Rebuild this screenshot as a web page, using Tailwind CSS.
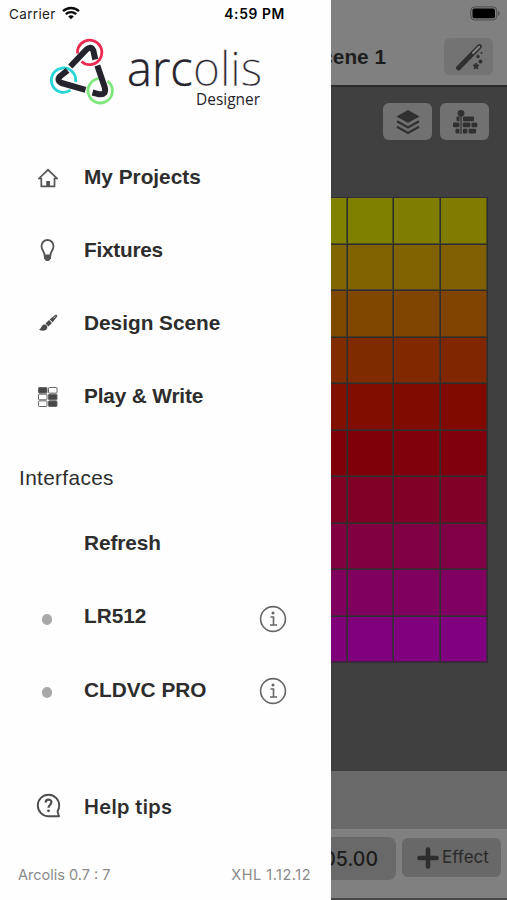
<!DOCTYPE html>
<html lang="en">
<head>
    <meta charset="UTF-8">
    <meta name="viewport" content="width=device-width, initial-scale=1.0">
    <title>Arcolis Designer</title>
    <script src="https://cdn.jsdelivr.net/npm/@tailwindcss/browser@4"></script>
</head>
<body class="bg-[#808080]">
    <div class="flex w-[507px] h-[900px] overflow-hidden font-['Liberation_Sans',sans-serif] text-[#2d2d2d]">

        <!-- Side menu -->
        <aside class="w-[331px] shrink-0 h-full bg-[#fefefe] flex flex-col">
            <!-- Status bar -->
            <div class="h-7 shrink-0 flex items-center pl-[9px] pr-[46px] text-[13.5px] text-[#222] font-['Inter',sans-serif]">
                <span class="tracking-[0.35px]">Carrier</span>
                <svg class="ml-[6px] -mt-[2px] w-[18px] h-[14px]" viewBox="0 0 18 14" fill="none" stroke="#0a0a0a" stroke-width="2.3">
                    <path d="M1 5.2C5.5 .9 12.5 .9 17 5.2"/>
                    <path d="M3.8 8.2C6.8 5.4 11.2 5.4 14.2 8.2"/>
                    <path d="M6.2 10.4C7.8 8.9 10.2 8.9 11.8 10.4L9 13.2z" fill="#0a0a0a" stroke="none"/>
                </svg>
                <span class="ml-auto font-semibold text-[13.8px] tracking-[0.65px] text-black">4:59 PM</span>
            </div>

            <!-- Logo -->
            <div class="h-[111.5px] shrink-0 pl-[44px]">
                <svg class="w-[230px] h-[90px]" viewBox="44 28 230 90" fill="none">
                    <g stroke-width="2.8">
                        <path d="M77.5 53.5A12.2 12.2 0 1 1 81.5 61.5" stroke="#ec2a50"/>
                        <path d="M70.5 90.2A12.2 12.2 0 1 1 75.6 82" stroke="#27d5d8"/>
                        <path d="M98.5 78.7A12.2 12.2 0 1 0 107.5 81" stroke="#7fe67c"/>
                    </g>
                    <g stroke="#25232b" stroke-width="6" stroke-linejoin="round">
                        <path d="M70.3 66.5L86.5 49.5Q91 45.5 93.3 50.5L95.3 59.5"/>
                        <path d="M97.3 65.5L104.8 87.5Q106.5 95 99.5 94.3L92.5 92.5"/>
                        <path d="M85.5 89.8L61.500 83Q56 80.300 60.500 76L67.5 70.3"/>
                    </g>
                    <g fill="#25232b" font-family="'Open Sans', sans-serif">
                        <text x="127" y="86" font-size="47" font-weight="300" stroke-width=".4"><tspan stroke="#25232b" textLength="65.5" lengthAdjust="spacingAndGlyphs">arc</tspan><tspan x="193" stroke="#fefefe" textLength="69" lengthAdjust="spacingAndGlyphs">olis</tspan></text>
                        <text x="196" y="105" font-size="15.5" textLength="64" lengthAdjust="spacingAndGlyphs">Designer</text>
                    </g>
                </svg>
            </div>

            <!-- Pages -->
            <nav class="text-[20.8px] font-bold">
                <a class="h-[73.3px] flex items-center">
                    <span class="w-[84px] pl-[38px] pt-[3px]">
                        <svg class="w-5 h-5" viewBox="0 0 20 20" fill="none" stroke="#555" stroke-width="1.7">
                            <path d="M1 10.5L10 1.8 19 10.5H16.5V18.3H3.3V10.5z"/>
                            <path d="M8.2 18V13h3.8v5z" fill="#555" stroke="none"/>
                        </svg>
                    </span>
                    My Projects
                </a>
                <a class="h-[73.3px] flex items-center">
                    <span class="w-[84px] pl-[40px] pt-[3px]">
                        <svg class="w-[15px] h-[23px]" viewBox="0 0 15 23" fill="none" stroke="#555" stroke-width="1.8">
                            <path d="M4.6 16.5C4.6 12 1.5 11.5 1.5 7a6 6 0 0 1 12 0C13.5 11.5 10.4 12 10.4 16.5z"/>
                            <path d="M4 16.5h7v3L8.8 22H6.2L4 19.5z" fill="#555" stroke="none"/>
                        </svg>
                    </span>
                    <span class="tracking-[-0.25px]">Fixtures</span>
                </a>
                <a class="h-[73.3px] flex items-center">
                    <span class="w-[84px] pl-[39px] pt-[1px]">
                        <svg class="w-[19px] h-[18px]" viewBox="0 0 19 18" fill="#4a4a4a">
                            <path d="M0 15.5C2.5 15 2.2 11.5 4.8 10.6 7 10 9 12 8.2 14.2 7 17 3 17.5 0 15.5z"/>
                            <path d="M6.5 9.5L10 6l3 3-3.6 3.4z"/>
                            <path d="M10.7 5.4L16 1C17.5 0 19 1.3 18 2.8L13.7 8.3z"/>
                            <path d="M14.5 4.2L16.5 2.3" stroke="#ddd" stroke-width=".9"/>
                        </svg>
                    </span>
                    Design Scene
                </a>
                <a class="h-[73.3px] flex items-center">
                    <span class="w-[84px] pl-[38px] pt-[1px]">
                        <svg class="w-[20px] h-[20px]" viewBox="0 0 20 20" fill="none" stroke="#666" stroke-width="1">
                            <rect x=".5" y=".5" width="8.5" height="5.6" rx=".8" fill="#484848"/>
                            <rect x="10.5" y=".5" width="8.5" height="5.6" rx=".8"/>
                            <rect x=".5" y="7.2" width="8.5" height="5.6" rx=".8"/>
                            <rect x="10.5" y="7.2" width="8.5" height="5.6" rx=".8" fill="#484848"/>
                            <rect x=".5" y="13.9" width="8.5" height="5.6" rx=".8"/>
                            <rect x="10.5" y="13.9" width="8.5" height="5.6" rx=".8" fill="#484848"/>
                        </svg>
                    </span>
                    <span class="tracking-[-0.15px]">Play &amp; Write</span>
                </a>
            </nav>

            <!-- Interfaces -->
            <h2 class="h-[73.3px] shrink-0 pl-[19px] pt-[17px] flex items-center text-[20.8px] tracking-[0.35px]">Interfaces</h2>
            <div class="text-[20.8px] font-bold">
                <div class="h-[73.4px] flex items-center pl-[84px] tracking-[-0.1px]">Refresh</div>
                <div class="h-[73.4px] flex items-center pr-[44px]">
                    <span class="w-[84px] pl-[42px] pt-[6px]"><i class="block w-[10px] h-[11px] rounded-full bg-[#a9a9a9]"></i></span>
                    LR512
                    <svg class="ml-auto mt-[5px] w-[28px] h-[28px]" viewBox="0 0 28 28" fill="none" stroke="#666" stroke-width="1.6">
                        <circle cx="14" cy="14" r="12.4"/>
                        <path d="M11.5 12h3v7.7M11 20h7"/>
                        <circle cx="14" cy="8" r="1.5" fill="#666" stroke="none"/>
                    </svg>
                </div>
                <div class="h-[73.4px] flex items-center pr-[44px]">
                    <span class="w-[84px] pl-[42px] pt-[6px]"><i class="block w-[10px] h-[11px] rounded-full bg-[#a9a9a9]"></i></span>
                    CLDVC PRO
                    <svg class="ml-auto mt-[4px] w-[28px] h-[28px]" viewBox="0 0 28 28" fill="none" stroke="#666" stroke-width="1.6">
                        <circle cx="14" cy="14" r="12.4"/>
                        <path d="M11.5 12h3v7.7M11 20h7"/>
                        <circle cx="14" cy="8" r="1.5" fill="#666" stroke="none"/>
                    </svg>
                </div>
            </div>

            <!-- Help and versions -->
            <div class="mt-auto h-[74px] flex items-center text-[20px] font-semibold tracking-[0.35px] font-['Inter',sans-serif]">
                <span class="w-[84px] pl-[36px] pb-[1px]">
                    <svg class="w-[25px] h-[25px]" viewBox="0 0 25 25" fill="none" stroke="#4d4d4d" stroke-width="1.9">
                        <path d="M23 23.2H12.5A10.7 10.7 0 1 1 23.2 12.5C23.2 15 22.4 17 21.5 18.5z" stroke-linejoin="round"/>
                        <path d="M9.6 9.6C9.6 5.5 15.6 5.7 15.4 9.3 15.3 11.7 12.5 11.8 12.5 14.8" stroke-width="2.2"/>
                        <circle cx="12.5" cy="17.8" r="1.4" fill="#4d4d4d" stroke="none"/>
                    </svg>
                </span>
                <span class="pt-[1px]">Help tips</span>
            </div>
            <div class="h-[57px] shrink-0 flex justify-between items-center pl-[18px] pr-[20px] pt-[6px] text-[14.5px] text-[#8a8a8a] font-['Inter',sans-serif]">
                <span>Arcolis 0.7 : 7</span>
                <span class="tracking-[0.5px]">XHL 1.12.12</span>
            </div>
        </aside>

        <!-- Dimmed editor -->
        <main class="w-[176px] h-full flex flex-col bg-[#808080] overflow-hidden">
            <header class="h-[87px] shrink-0 border-b-2 border-[#2b2b2b] flex flex-col">
                <div class="h-[27px] flex items-center justify-end pr-[6px]">
                    <svg class="w-[31px] h-[15px]" viewBox="0 0 31 15">
                        <rect x=".8" y=".9" width="26" height="13" rx="3.8" fill="#808080" stroke="#4a4a4a"/>
                        <rect x="2.5" y="2.6" width="22.5" height="9.6" rx="2" fill="#000"/>
                        <path d="M28.2 5v5c1.8-.8 1.8-4.2 0-5z" fill="#4a4a4a"/>
                    </svg>
                </div>
                <div class="h-[58px] pt-[1px] flex items-center justify-between pr-[14px]">
                    <h1 class="w-[55px] flex justify-end whitespace-nowrap text-[20.8px] font-bold text-[#1d1d1d]">Scene 1</h1>
                    <button class="w-[49px] h-[37px] rounded-md bg-[#737373] flex items-center justify-center">
                        <svg class="w-[28px] h-[28px]" viewBox="0 0 28 28">
                            <path d="M3.5 25L24.5 3.5" stroke="#303030" stroke-width="4.8" stroke-linecap="round"/>
                            <path d="M18 10L24.2 3.8" stroke="#858585" stroke-width="2" stroke-linecap="round"/>
                            <g fill="#303030">
                                <path d="M21 20l.9 1.9 2.1.3-1.5 1.5.4 2.1-1.9-1-1.9 1 .4-2.1-1.5-1.5 2.1-.3z" stroke="#303030"/>
                                <circle cx="25.5" cy="18.5" r="1.9"/>
                                <circle cx="23" cy="13.5" r="1.7"/>
                                <circle cx="26.5" cy="10" r="1"/>
                            </g>
                        </svg>
                    </button>
                </div>
            </header>

            <section class="h-[684px] shrink-0 bg-[#404040] flex flex-col items-end">
                <div class="flex gap-2 mt-[16px] mr-[18px]">
                    <button class="w-[49px] h-[37px] rounded-md bg-[#717171] flex items-center justify-center">
                        <svg class="w-[24px] h-[26px]" viewBox="0 0 24 26" fill="#303030">
                            <path d="M12 1L23.5 7.5 12 14 .5 7.5z"/>
                            <path d="M1 12.3L12 18.5 23 12.3M1 17.7L12 23.9 23 17.7" fill="none" stroke="#303030" stroke-width="2.2"/>
                        </svg>
                    </button>
                    <button class="w-[49px] h-[37px] rounded-md bg-[#717171] flex items-center justify-center">
                        <svg class="w-[26px] h-[26px]" viewBox="0 0 26 26" fill="#303030">
                            <circle cx="9" cy="4.3" r="3.4"/>
                            <path d="M8.4 7h1.2v18H8.4z"/>
                            <rect x="4.5" y="7.5" width="3" height="4.7" rx=".8"/>
                            <rect x="11" y="7.5" width="11" height="4.7" rx=".8"/>
                            <rect x="1" y="13.6" width="6.4" height="4.7" rx="1.3"/>
                            <rect x="10.8" y="13.6" width="7.5" height="4.7" rx="1"/>
                            <rect x="19.4" y="13.6" width="6" height="4.7" rx="1.5"/>
                            <rect x="3.5" y="19.7" width="4" height="4.7" rx="1"/>
                            <rect x="10.8" y="19.7" width="4.5" height="4.7" rx="1"/>
                            <rect x="16.6" y="19.7" width="7.5" height="4.7" rx="1"/>
                        </svg>
                    </button>
                </div>

                <!-- Pixel grid, one band of colour per row -->
                <div id="pixels" class="mt-[57px] mr-[19px] w-[157px] h-[466px] border-y border-r border-[#2e2e2e] bg-[#2e2e2e] grid grid-cols-[16px_45px_46px_46px] grid-rows-[46px_45px_46px_45px_46px_45px_46px_45px_46px_45px] gap-px"></div>
            </section>

            <div class="h-[58px] shrink-0 bg-[#696969]"></div>

            <footer class="flex-1 border-b-2 border-[#484848] flex items-start pt-[8px] gap-[6px]">
                <div class="w-[65px] h-[43px] rounded-r-lg bg-[#696969] flex items-center justify-end pr-[18px] pt-[2px] whitespace-nowrap overflow-hidden text-[19.5px] font-medium text-[#1b1b1b] font-['Inter',sans-serif]">05.00</div>
                <button class="mt-[1px] w-[99px] h-[39px] rounded-md bg-[#686868] flex items-center pl-[15px] gap-[3px] text-[17px] text-[#292929] font-['Inter',sans-serif]">
                    <svg class="w-[22px] h-[22px] shrink-0" viewBox="0 0 22 22" stroke="#2d2d2d" stroke-width="4.6" stroke-linecap="round">
                        <path d="M11 2.5v17M2.5 11h17"/>
                    </svg>
                    <span class="pt-[1px]">Effect</span>
                </button>
            </footer>
        </main>
    </div>

    <script>
        const rows = [
            ['#808200', '#807c00'],
            ['#806500', '#806000'],
            ['#804900', '#804300'],
            ['#802c00', '#802600'],
            ['#801000', '#800900'],
            ['#800008', '#80000e'],
            ['#800023', '#800028'],
            ['#800040', '#800045'],
            ['#80005d', '#800062'],
            ['#80007a', '#800080']
        ];
        const pixels = document.getElementById('pixels');
        rows.forEach(function(row) {
            for (let i = 0; i < 4; i++) {
                const cell = document.createElement('div');
                cell.className = 'border-r border-b border-[#2e2e2e]/60';
                cell.style.backgroundColor = 'color-mix(in srgb, ' + row[1] + ' ' + (i * 33.33) + '%, ' + row[0] + ')';
                pixels.appendChild(cell);
            }
        });
    </script>
</body>
</html>
